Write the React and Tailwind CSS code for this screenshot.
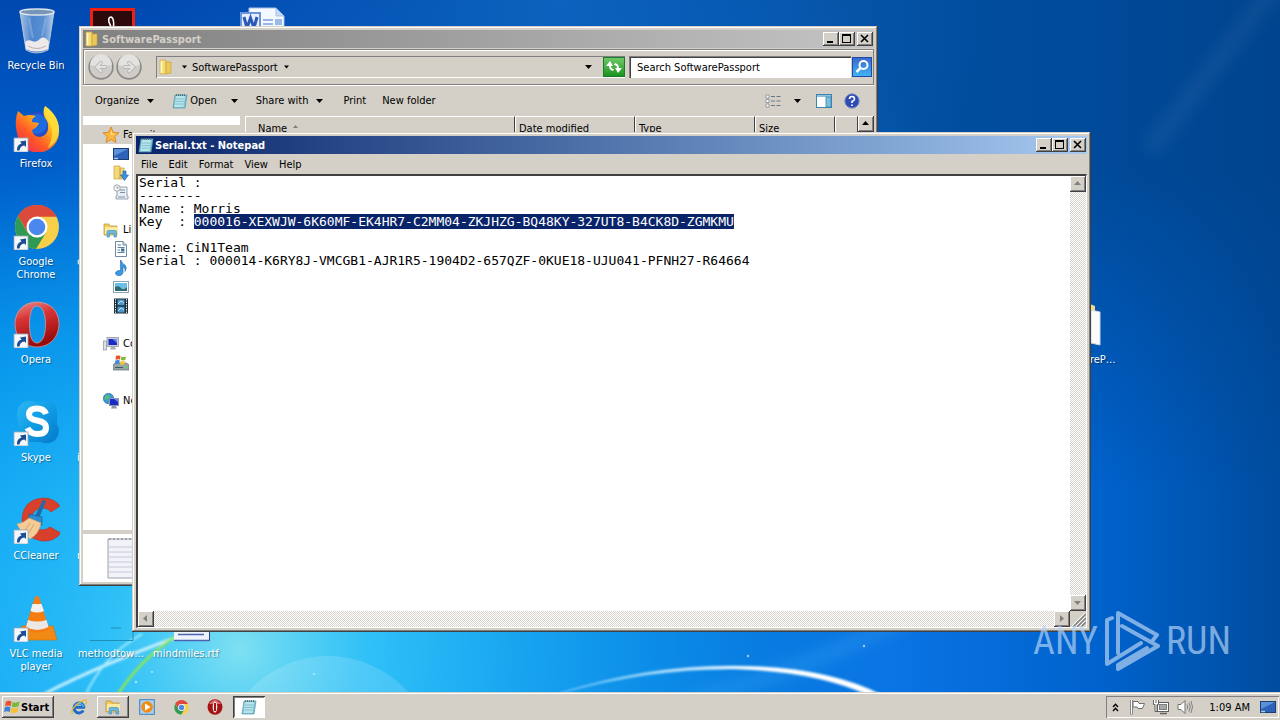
import React, { useEffect, useRef } from 'react'

const raised = 'bg-[#d4d0c8] shadow-[inset_-1px_-1px_#404040,inset_1px_1px_#fff,inset_-2px_-2px_#808080]'
const sunken = 'shadow-[inset_1px_1px_#808080,inset_-1px_-1px_#fff]'
const frame = 'bg-[#d4d0c8] shadow-[inset_-1px_-1px_#404040,inset_1px_1px_#d4d0c8,inset_-2px_-2px_#808080,inset_2px_2px_#fff]'
const track = 'bg-[#ebe8e3] bg-[repeating-conic-gradient(#d8d4cd_0_25%,#fff_0_50%)] bg-[length:2px_2px]'

const NOTE = `Serial :
--------
Name : Morris
Key  : 000016-XEXWJW-6K60MF-EK4HR7-C2MM04-ZKJHZG-BQ48KY-327UT8-B4CK8D-ZGMKMU

Name: CiN1Team
Serial : 000014-K6RY8J-VMCGB1-AJR1R5-1904D2-657QZF-0KUE18-UJU041-PFNH27-R64664`

/* ---------- wallpaper ---------- */

const Wallpaper = () => (
  <svg className="absolute inset-0 h-full w-full" viewBox="0 0 1280 692" preserveAspectRatio="none" aria-hidden="true">
    <defs>
      <linearGradient id="w-left" x1="0" y1="0" x2="0" y2="1">
        <stop offset="0" stopColor="#0048b0" />
        <stop offset=".25" stopColor="#0060cc" />
        <stop offset=".5" stopColor="#008ce6" />
        <stop offset=".75" stopColor="#06a2f2" />
        <stop offset="1" stopColor="#0ca0f2" />
      </linearGradient>
      <linearGradient id="w-right" x1="0" y1="0" x2="1" y2="0">
        <stop offset=".3" stopColor="#0060c4" stopOpacity="0" />
        <stop offset=".7" stopColor="#0a74e4" />
        <stop offset=".86" stopColor="#0062cc" />
        <stop offset="1" stopColor="#004c9e" />
      </linearGradient>
      <linearGradient id="w-top" x1="500" y1="240" x2="860" y2="20" gradientUnits="userSpaceOnUse">
        <stop offset="0" stopColor="#00407c" stopOpacity="0" />
        <stop offset="1" stopColor="#004288" stopOpacity=".75" />
      </linearGradient>
      <linearGradient id="w-fade" x1="0" y1="0" x2="0" y2="1">
        <stop offset="0" stopColor="#fff" />
        <stop offset=".25" stopColor="#fff" />
        <stop offset=".7" stopColor="#000" />
      </linearGradient>
      <mask id="w-mask"><rect width="1280" height="692" fill="url(#w-fade)" /></mask>
      <radialGradient id="w-glow" cx="240" cy="650" r="520" gradientUnits="userSpaceOnUse">
        <stop offset="0" stopColor="#7fe0f2" />
        <stop offset=".25" stopColor="#38c8f8" stopOpacity=".8" />
        <stop offset="1" stopColor="#10a0f8" stopOpacity="0" />
      </radialGradient>
      <radialGradient id="w-sky" cx="560" cy="0" r="420" gradientUnits="userSpaceOnUse">
        <stop offset="0" stopColor="#0c62be" />
        <stop offset="1" stopColor="#0c62be" stopOpacity="0" />
      </radialGradient>
      <linearGradient id="w-arc" x1="560" y1="0" x2="880" y2="0" gradientUnits="userSpaceOnUse">
        <stop offset="0" stopColor="#9fe0ff" stopOpacity=".6" />
        <stop offset=".6" stopColor="#fff" />
        <stop offset="1" stopColor="#fff" />
      </linearGradient>
      <filter id="w-soft" x="-20%" y="-20%" width="140%" height="140%"><feGaussianBlur stdDeviation="1" /></filter>
      <filter id="w-haze" x="-50%" y="-50%" width="200%" height="200%"><feGaussianBlur stdDeviation="8" /></filter>
    </defs>
    <rect width="1280" height="692" fill="url(#w-left)" />
    <rect width="1280" height="692" fill="url(#w-right)" />
    <rect width="1280" height="692" fill="url(#w-top)" mask="url(#w-mask)" />
    <rect width="1280" height="692" fill="url(#w-sky)" />
    <rect width="1280" height="692" fill="url(#w-glow)" />
    <circle cx="328" cy="763" r="107" fill="#fff" opacity=".14" />
    <path d="M1150 150 1280 -20" stroke="#fff" strokeWidth="16" opacity=".06" filter="url(#w-haze)" />
    <path d="M690 700Q810 670 920 610" fill="none" stroke="#5cc4ff" strokeWidth="12" opacity=".25" filter="url(#w-haze)" />
    <g fill="none" filter="url(#w-soft)">
      <path d="M44 694Q100 665 180 636" stroke="#d8f6ff" strokeWidth="3" opacity=".85" />
      <path d="M86 694Q104 655 142 634" stroke="#aeeeff" strokeWidth="2" opacity=".8" />
      <path d="M118 694Q140 660 176 636" stroke="#8fe84a" strokeWidth="2.5" />
      <path d="M560 693Q650 665 734 666Q825 666 882 695L868 695Q815 671 734 669Q650 668 560 693z" fill="url(#w-arc)" stroke="#b8e8ff" strokeOpacity=".4" />
    </g>
    <g fill="#fff" opacity=".6">
      <circle cx="136" cy="682" r="1.2" /><circle cx="152" cy="672" r="1" /><circle cx="314" cy="674" r="1" />
      <circle cx="748" cy="656" r="1.2" /><circle cx="864" cy="646" r="1.2" />
    </g>
  </svg>
)

const Watermark = () => (
  <div className="pointer-events-none absolute right-[49px] bottom-[20px] flex items-center gap-[6px] font-['Liberation_Sans_Narrow','Roboto_Condensed',Roboto,sans-serif] text-[38px] leading-[62px] text-[#b4d2f4]/70">
    <span>ANY</span>
    <svg width="56" height="62" viewBox="0 0 56 62" fill="none" stroke="currentColor" strokeWidth="4" strokeLinejoin="round" strokeLinecap="round">
      <path d="M8 8 3 10V54L37 33M14 43V3L53 25 49 30M18 16 54 36 14 59V55L43 38" />
    </svg>
    <span>RUN</span>
  </div>
)

/* ---------- desktop icons ---------- */

const Shortcut = () => (
  <g transform="translate(2 34)">
    <rect width="14" height="14" fill="#f4f8fc" stroke="#9aa8b8" strokeWidth=".8" />
    <path d="M3 12.500Q2.500 7 7.500 5.500L6 3.500 12 2.500V9L10.300 7.500Q6 8 5.500 12.500z" fill="#1c4c94" />
  </g>
)

const Svg48 = ({ children }) => <svg width="48" height="48" viewBox="0 0 48 48" className="shrink-0" aria-hidden="true">{children}</svg>

const BinIcon = () => (
  <Svg48>
    <defs>
      <linearGradient id="bin" x1="0" x2="1"><stop offset="0" stopColor="#a9c4e4" /><stop offset=".35" stopColor="#4c84cc" /><stop offset=".7" stopColor="#5c90d4" /><stop offset="1" stopColor="#b8cfe8" /></linearGradient>
    </defs>
    <path d="M8 6 14 44Q24 50 36 44L42 6z" fill="url(#bin)" stroke="#b4c4d8" strokeWidth="1" />
    <path d="M13 36Q16 33 20 35T28 33T37 36L36 43Q24 48 14 43z" fill="#eeeaea" />
    <path d="M16 40Q25 45 34 40" fill="none" stroke="#b8b0b0" />
    <path d="M17 12 21 32M34 12 30 30" stroke="#8cb4e4" strokeWidth="2" opacity=".6" />
    <ellipse cx="25" cy="6" rx="17" ry="3" fill="#7894b8" stroke="#dce4ec" strokeWidth="1.500" />
  </Svg48>
)

const FirefoxIcon = () => (
  <Svg48>
    <defs>
      <linearGradient id="fx" x1=".9" y1="0" x2=".1" y2="1"><stop offset="0" stopColor="#fff04a" /><stop offset=".35" stopColor="#ffb41e" /><stop offset=".65" stopColor="#ff5a26" /><stop offset="1" stopColor="#f0225c" /></linearGradient>
    </defs>
    <circle cx="26" cy="25" r="17" fill="#2a4cc0" />
    <circle cx="25" cy="20" r="10" fill="#1c6ce0" />
    <path d="M33 2Q47 12 47 26A21 21 0 0 1 5 29Q2 16 6 7L12 12Q17 10 24 12Q19 15 20 18L27 19Q25 24 20 26Q21 33 28 33Q37 31 36 22Q36 17 33 14Q30 8 33 2z" fill="url(#fx)" />
    <path d="M33 2Q47 12 47 26Q46 38 36 44Q43 30 38 20Q31 11 33 2z" fill="#ffdf3c" opacity=".8" />
    <Shortcut />
  </Svg48>
)

const ChromeMark = () => (
  <>
    <circle cx="25" cy="25" r="22" fill="#f8cf48" />
    <path d="M25 25 6 14A22 22 0 0 1 44.500 14.500H25z" fill="#dc4a3c" />
    <path d="M25 14.500H44.500A22 22 0 0 0 6 14L15.500 30z" fill="#dc4a3c" />
    <path d="M6 14A22 22 0 0 0 24 47L34 30.500 25 35.500 15.500 30.500z" fill="#2e9a56" />
    <circle cx="25" cy="25" r="10.500" fill="#fff" />
    <circle cx="25" cy="25" r="8.300" fill="#4a88ee" />
  </>
)

const ChromeIcon = () => <Svg48><ChromeMark /><Shortcut /></Svg48>

const OperaIcon = () => (
  <Svg48>
    <defs>
      <linearGradient id="op" x1="0" y1="0" x2=".3" y2="1"><stop offset="0" stopColor="#e89090" /><stop offset=".4" stopColor="#d83434" /><stop offset="1" stopColor="#980c0c" /></linearGradient>
    </defs>
    <path fillRule="evenodd" d="M25 2C38 2 47 11 47 24S38 47 25 47 3 37 3 24 12 2 25 2zM25 6C20 6 17.500 13 17.500 24.500S20 43 25 43 33.500 36 33.500 24.500 30 6 25 6z" fill="url(#op)" stroke="#e4a0a0" strokeWidth=".7" />
    <Shortcut />
  </Svg48>
)

const SkypeIcon = () => (
  <Svg48>
    <defs>
      <linearGradient id="sk" x1="0" y1="0" x2="1" y2="1"><stop offset="0" stopColor="#2cb8f4" /><stop offset=".5" stopColor="#109ce4" /><stop offset="1" stopColor="#0478c8" /></linearGradient>
    </defs>
    <path d="M14 3Q20 2 24 4H38Q45 5 45 13V26Q50 36 42 43Q35 47 29 44H14Q6 44 6 36V22Q2 8 14 3z" fill="url(#sk)" />
    <path d="M34 16Q32 10.500 25 10.500Q17 10.500 17 16.500Q17 21 25 22.500Q34 24 34 29.500Q34 36 25.500 36Q18 36 15.500 30" fill="none" stroke="#fff" strokeWidth="6" />
    <Shortcut />
  </Svg48>
)

const CCleanerIcon = () => (
  <Svg48>
    <path d="M48 10Q42 2 31 2Q12 3 10 22Q10 42 30 45Q42 46 49 37L38 31A11 11 0 1 1 39 16z" fill="#d8402c" stroke="#b43020" strokeWidth=".6" />
    <path d="M31 4 34 5 27 22 23 20z" fill="#1c6cac" />
    <path d="M17 18 30 21V29L17 26z" fill="#2c8cd0" stroke="#1a5c98" strokeWidth=".7" />
    <path d="M17 22 29 27Q27 38 18 43Q9 37 5 28Q12 27 17 22z" fill="#f4cc98" stroke="#d8a468" strokeWidth=".7" />
    <path d="M18 27 13 34M22 28 17 37" stroke="#d8a468" />
    <Shortcut />
  </Svg48>
)

const ConeIcon = () => (
  <Svg48>
    <path d="M10 32H41L45 46H6z" fill="#f08a14" stroke="#d87008" strokeWidth=".7" />
    <path d="M23 3Q25 1 27 3L37 35Q25 42 13 35z" fill="#f47c10" />
    <path d="M20.500 10H29.500L32 17Q25 20 18.500 17z" fill="#f4f2f0" />
    <path d="M16 26Q25 29 34.500 26L36.500 33Q25 39 14 33z" fill="#ece8e6" />
    <Shortcut />
  </Svg48>
)

const PdfIcon = () => (
  <Svg48>
    <rect x="4.500" y="3.500" width="42" height="42" fill="#2c0a0c" stroke="#f02010" strokeWidth="3" />
    <path d="M24 11q-3 0-2 5l4 10q2-14-2-15z" fill="none" stroke="#fff" strokeWidth="1.600" />
  </Svg48>
)

const WordIcon = () => (
  <Svg48>
    <g transform="translate(2)">
      <path d="M10 2H37L45 10V46H10z" fill="#f4f8ff" stroke="#a8c0e8" />
      <path d="M37 2V10H45z" fill="#c4dcf4" stroke="#a8c0e8" />
      <path d="M24 14H34M24 18H34" stroke="#7c9ce0" strokeWidth="1.500" />
      <rect x="36" y="13" width="7" height="6" fill="#9cb8e4" />
      <rect x="2" y="7" width="19" height="19" fill="#e8f0fc" stroke="#6c94dc" strokeWidth="2" />
      <path d="M5 11 8 22 11.500 12 15 22 18 11" fill="none" stroke="#2c58b8" strokeWidth="3" />
    </g>
  </Svg48>
)

const PaperIcon = () => (
  <Svg48>
    <rect x="12" y="2" width="36" height="44" fill="#eef2fc" />
    <path d="M12 46.500H48M16 40.500H42" stroke="#4c64b0" strokeWidth="1.500" />
    <path d="M47.500 38V46" stroke="#2c4488" />
  </Svg48>
)

const GhostIcon = () => (
  <Svg48><path d="M3 46.500H46V38M24 34H34" fill="none" stroke="#1c90b8" /></Svg48>
)

const FolderIcon = () => (
  <Svg48>
    <path d="M28 4 33 6V40L28 44z" fill="#f0dc8c" />
    <path d="M29 10 38 12V45L29 43z" fill="#fbfbfb" stroke="#d4d4d4" />
  </Svg48>
)

const NoIcon = () => <Svg48 />

// each cell of the desktop grid is 75 x 98
const shortcuts = [
  { label: 'Recycle Bin', icon: BinIcon, at: 'items-center col-start-1 row-start-1' },
  { label: 'Firefox', icon: FirefoxIcon, at: 'items-center col-start-1 row-start-2' },
  { label: 'Google Chrome', icon: ChromeIcon, at: 'items-center col-start-1 row-start-3' },
  { label: 'Opera', icon: OperaIcon, at: 'items-center col-start-1 row-start-4' },
  { label: 'Skype', icon: SkypeIcon, at: 'items-center col-start-1 row-start-5' },
  { label: 'CCleaner', icon: CCleanerIcon, at: 'items-center col-start-1 row-start-6' },
  { label: 'VLC media player', icon: ConeIcon, at: 'items-center col-start-1 row-start-7' },
  { label: '', icon: PdfIcon, at: 'items-center col-start-2 row-start-1' },
  { label: 'c', icon: NoIcon, at: 'items-start col-start-2 row-start-3' },
  { label: 'i', icon: NoIcon, at: 'items-start col-start-2 row-start-5' },
  { label: 'r', icon: NoIcon, at: 'items-start col-start-2 row-start-6' },
  { label: 'methodtow…', icon: GhostIcon, at: 'items-center col-start-2 row-start-7' },
  { label: 'mindmiles.rtf', icon: PaperIcon, at: 'items-center col-start-3 row-start-7' },
  { label: '', icon: WordIcon, at: 'items-center col-start-4 row-start-1' },
  { label: 'SoftwareP…', icon: FolderIcon, at: 'items-center col-start-15 row-start-4' },
]

const DesktopIcon = ({ label, icon: Icon, at }) => (
  <button className={`flex flex-col pt-[6px] pr-[3px] text-white ${at}`}>
    <Icon />
    <span className="mt-[5px] px-[2px] text-center leading-[13px] [text-shadow:1px_1px_1px_#0006]">{label}</span>
  </button>
)

/* ---------- small icons ---------- */

const Svg16 = ({ children, className = '' }) => (
  <svg width="16" height="16" viewBox="0 0 16 16" className={`shrink-0 ${className}`} aria-hidden="true">{children}</svg>
)

const NotepadIcon = () => (
  <Svg16>
    <path d="M3 2H15L13 15H1z" fill="#7cc4d4" stroke="#5a94a8" strokeWidth=".7" />
    <path d="M4 3H13L11.500 14H2.500z" fill="#b8e4ec" />
    <path d="M4 6H12M4 8.500H12M3.500 11H11.500" stroke="#6cb0c4" strokeWidth=".7" />
    <path d="M4.500 1V3M6.500 1V3M8.500 1V3M10.500 1V3M12.500 1V3" stroke="#486870" strokeWidth=".8" />
  </Svg16>
)

const YellowFolder = () => (
  <Svg16>
    <path d="M2 1H8V15H2z" fill="#f4dc78" stroke="#d0a840" strokeWidth=".7" />
    <path d="M8 3H13V14L8 15z" fill="#ecc858" stroke="#c8a040" strokeWidth=".7" />
    <path d="M3.500 2V14" stroke="#fff8c8" strokeWidth="1.500" />
  </Svg16>
)

const Caret = ({ className = '' }) => (
  <svg width="7" height="4" viewBox="0 0 7 4" className={`shrink-0 ${className}`} aria-hidden="true"><path d="M0 0H7L3.500 4z" fill="currentColor" /></svg>
)

const StarIcon = () => (
  <Svg16><path d="M8 0 10.300 5.300 16 5.800 11.700 9.600 13 15.500 8 12.400 3 15.500 4.300 9.600 0 5.800 5.700 5.300z" fill="#fcb83c" stroke="#d87c1c" strokeWidth=".8" /><path d="M8 3 9.300 6.500 13 7 8 8z" fill="#ffe690" /></Svg16>
)
const ScreenIcon = () => (
  <Svg16><rect x=".5" y="2.500" width="15" height="11" fill="#2c62b8" stroke="#1c3c74" /><path d="M1 3H15L1 10z" fill="#5c90d8" /><path d="M1 12.500H5" stroke="#a8c8ec" strokeWidth="1.500" /></Svg16>
)
const DownloadIcon = () => (
  <Svg16><path d="M1 1H7V14H1zM7 3H11V14H7z" fill="#f4d878" stroke="#c8a040" strokeWidth=".7" /><path d="M10 6H13V10H15.500L11.500 15.500 7.500 10H10z" fill="#3c90e0" stroke="#1c5ca4" strokeWidth=".6" /></Svg16>
)
const RecentIcon = () => (
  <Svg16><path d="M4 3H14V12H15V15H3V12H4z" fill="#e8eef4" stroke="#80909c" strokeWidth=".8" /><path d="M7 6H12M7 8.500H12M5 13H12" stroke="#7890a8" /><circle cx="4" cy="4" r="3.200" fill="#f4f4f4" stroke="#8c98a0" strokeWidth=".8" /><path d="M4 2.500V4H5.500" fill="none" stroke="#667" strokeWidth=".7" /></Svg16>
)
const LibraryIcon = () => (
  <Svg16><path d="M1 2H6L7 4H14V13H1z" fill="#f0cc5c" stroke="#b89030" strokeWidth=".7" /><path d="M2 5H15V12H2z" fill="#fbeaa0" /><path d="M4 15V10Q4 8.500 5.500 8.500H12Q13.500 8.500 13.500 10V15H11V11.500H6.500V15z" fill="#6cb8e4" stroke="#3888bc" strokeWidth=".6" /></Svg16>
)
const DocIcon = () => (
  <Svg16><path d="M2.500 .5H10L13.500 4V15.500H2.500z" fill="#fff" stroke="#7088a0" /><path d="M10 .5V4H13.500" fill="#d0e0f0" stroke="#7088a0" /><path d="M4.500 4H8M4.500 6.500H11.500M4.500 9H7M4.500 11.500H11.500" stroke="#5880a8" /><rect x="8" y="7.500" width="3.500" height="3" fill="#4070a0" /></Svg16>
)
const MusicIcon = () => (
  <Svg16><path d="M8 0Q9 4 12 5Q14.500 8 12 11.500Q13 8 10 7V12.500Q9 16 5.500 15.800Q2 15 2.500 12.500Q4 10 7.500 10.500V0z" fill="#3c98e4" stroke="#1c64ac" strokeWidth=".6" /></Svg16>
)
const PictureIcon = () => (
  <Svg16><rect x=".5" y="2.500" width="15" height="11" fill="#fff" stroke="#8ca4b4" /><rect x="2" y="4" width="12" height="8" fill="#6cc0e8" /><path d="M2 8Q6 6 8 9T14 8V12H2z" fill="#2c6c70" /></Svg16>
)
const VideoIcon = () => (
  <Svg16><rect x="1" y=".5" width="14" height="15" fill="#1c2c34" /><path d="M2.500 1V15M13.500 1V15" stroke="#e0e8ec" strokeDasharray="1.500 1" /><rect x="4.500" y="1.500" width="7" height="5.800" fill="#4c98cc" /><rect x="4.500" y="8.700" width="7" height="5.800" fill="#4c98cc" /><path d="M5 6 8 3 11 5M5 13 8 10 11 12" stroke="#bce0f4" fill="none" /></Svg16>
)
const ComputerIcon = () => (
  <Svg16><rect x="4" y="1.500" width="11.500" height="9" fill="#c8ccd8" stroke="#8890a0" strokeWidth=".7" /><rect x="5.500" y="3" width="8.500" height="6" fill="#1c2cc0" /><path d="M9.500 3H14V7z" fill="#6c88f0" /><path d="M8 11H12L13 13.500H7z" fill="#a8acb4" /><rect x=".5" y="5" width="3" height="9" fill="#dce0e4" stroke="#8890a0" strokeWidth=".7" /></Svg16>
)
const DriveIcon = () => (
  <Svg16><path d="M0 10 2 8H13.500L16 10V15H0z" fill="#98a4a8" stroke="#607078" strokeWidth=".7" /><path d="M2 12.500H10" stroke="#405860" /><rect x="11.500" y="11.500" width="2.500" height="1.500" fill="#50d850" /><path d="M3 .8Q5 0 7.500 .8L7 4.500Q4.500 4 2.500 4.800z" fill="#e8542c" /><path d="M8.300 1.500Q10 2.500 13 1.500L12.300 5Q9.500 5.800 7.800 4.900z" fill="#80bc3c" /><path d="M2.300 5.500Q4.500 4.800 6.700 5.300L6.200 9Q4 8 1.800 9z" fill="#3c88dc" /><path d="M7.600 5.800Q9.500 6.800 12 6L11.500 9.300Q9 10 7 9.200z" fill="#f8c42c" /></Svg16>
)
const NetworkIcon = () => (
  <Svg16><circle cx="5.500" cy="5.500" r="5.200" fill="#3c98d8" stroke="#1c68a0" strokeWidth=".6" /><path d="M2 3Q5 1 7 3L5 6 2 7zM5 8 8 7V10z" fill="#58c068" /><rect x="6.500" y="5.500" width="9" height="7" fill="#1c2cc0" stroke="#9098b0" /><path d="M11 6H15V9z" fill="#6c88f0" /><path d="M9 13H13L14 15.500H8z" fill="#8c94a8" /></Svg16>
)

const WinFlag = () => (
  <Svg16>
    <path d="M2 2.500Q5 .8 7.500 2.500L6.700 7.300Q4 5.800 1 7.300z" fill="#e8542c" />
    <path d="M8.500 3Q11 4.500 15.500 2.500L14.500 7.300Q11 9 7.700 7.700z" fill="#7cb83c" />
    <path d="M.900 8.300Q3.500 6.800 6.500 8.400L5.700 13Q3 11.500 0 13z" fill="#3c80d8" />
    <path d="M7.500 8.800Q10.500 10.300 14.300 8.500L13.300 13Q10 15 6.700 13.400z" fill="#f8c02c" />
  </Svg16>
)
const IeIcon = () => (
  <Svg16>
    <path d="M13 8.500A5 5 0 1 0 12.300 11.500M4 8.300H14" fill="none" stroke="#1c6cc8" strokeWidth="3" />
    <path d="M12.500 8A4.600 4.600 0 0 0 4 6.500" fill="none" stroke="#48b0f0" strokeWidth="1.500" />
    <path d="M1.500 15Q-1 11 6 5.500T15 1Q16.500 2.500 14.500 5.500" fill="none" stroke="#e8b828" strokeWidth="1.200" />
  </Svg16>
)
const PlayerIcon = () => (
  <Svg16><rect x=".7" y=".7" width="14.600" height="14.600" fill="#a8d0f0" stroke="#3c80c0" /><circle cx="8" cy="8" r="5.800" fill="#f48c14" /><path d="M6 4.500 11.500 8 6 11.500z" fill="#fff" /></Svg16>
)
const ChromeSmall = () => <svg width="15" height="15" viewBox="2 2 46 46" aria-hidden="true"><ChromeMark /></svg>
const OperaSmall = () => (
  <Svg16><ellipse cx="8" cy="8" rx="7.500" ry="7.800" fill="#a81414" /><path d="M2 5Q8-3 14 5" fill="#d86c6c" /><ellipse cx="8" cy="8" rx="2.300" ry="5.500" fill="#f4ecec" /><path d="M8 4V12" stroke="#a81414" strokeWidth="2" /></Svg16>
)

/* ---------- window chrome ---------- */

const CaptionButtons = () => (
  <div className="ml-auto flex items-center pr-px text-black">
    <button aria-label="Minimize" className={`h-[14px] w-4 ${raised}`}>
      <svg width="16" height="14" aria-hidden="true"><path d="M4 9H10V11H4z" /></svg>
    </button>
    <button aria-label="Maximize" className={`h-[14px] w-4 ${raised}`}>
      <svg width="16" height="14" aria-hidden="true"><path fillRule="evenodd" d="M3 2H12V11H3zM4 4V10H11V4z" /></svg>
    </button>
    <button aria-label="Close" className={`ml-[2px] h-[14px] w-4 ${raised}`}>
      <svg width="16" height="14" aria-hidden="true"><path d="M4 3 11 10M11 3 4 10" stroke="#000" strokeWidth="1.600" /></svg>
    </button>
  </div>
)

const arrows = { up: 'M4 9H11L7.500 5z', down: 'M4 6H11L7.500 10z', left: 'M9 4V11L5 7.500z', right: 'M6 4V11L10 7.500z' }
const ScrollButton = ({ dir, className = 'text-[#808080]' }) => (
  <button aria-label={`Scroll ${dir}`} className={`h-4 w-4 shrink-0 ${raised} ${className}`}>
    <svg width="16" height="16" aria-hidden="true"><path d={arrows[dir]} fill="currentColor" /></svg>
  </button>
)

/* ---------- explorer ---------- */

const tree = [
  { label: 'Favorites', icon: StarIcon, active: true, items: [['Desktop', ScreenIcon], ['Downloads', DownloadIcon], ['Recent Places', RecentIcon]] },
  { label: 'Libraries', icon: LibraryIcon, items: [['Documents', DocIcon], ['Music', MusicIcon], ['Pictures', PictureIcon], ['Videos', VideoIcon]] },
  { label: 'Computer', icon: ComputerIcon, items: [['Local Disk (C:)', DriveIcon]] },
  { label: 'Network', icon: NetworkIcon, items: [] },
]

const columns = [
  ['Name', 'w-[270px] pl-[13px]'],
  ['Date modified', 'w-[120px] pl-1'],
  ['Type', 'w-[120px] pl-1'],
  ['Size', 'w-20 pl-1'],
  ['', ''],
]

const Explorer = () => (
  <section aria-label="SoftwarePassport" className={`absolute top-[26px] right-[402px] bottom-[106px] left-[79px] flex flex-col p-1 ${frame}`}>
    <header className="flex h-[18px] shrink-0 items-center gap-[2px] bg-linear-to-r from-[#808080] to-[#c4c4c4] pl-px font-bold text-[#d4d0c8]">
      <YellowFolder />
      <h1>SoftwarePassport</h1>
      <CaptionButtons />
    </header>

    <div className="mt-px flex h-9 shrink-0 items-center border border-[#808080] px-1 shadow-[inset_1px_1px_#fff,0_1px_#fff]">
      {['M16 12H8M12 8 8 12 12 16', 'M8 12H16M12 8 16 12 12 16'].map((d, i) => (
        <button key={d} aria-label={i ? 'Forward' : 'Back'} className="mr-[2px]">
          <svg width="26" height="26" viewBox="0 0 24 24" fill="none" strokeLinecap="round" aria-hidden="true">
            <circle cx="12" cy="12" r="11" fill="#cfccc9" stroke="#8c8a88" strokeWidth="1.500" />
            <path d="M2 10A10 10 0 0 1 22 10Q12 14 2 10z" fill="#e4e2e0" />
            <path d={d} stroke="#b8b5b2" strokeWidth="3.500" />
            <path d={d} stroke="#e4e2e0" strokeWidth="2" />
          </svg>
        </button>
      ))}
      <div className={`ml-3 flex h-[22px] flex-1 items-center pl-[2px] ${sunken}`}>
        <YellowFolder />
        <Caret className="ml-2 w-[5px]" />
        <button className="ml-[5px]">SoftwarePassport</button>
        <Caret className="ml-[6px] w-[5px]" />
        <Caret className="mr-[11px] ml-auto" />
        <button aria-label="Refresh" className="flex h-5 w-[22px] items-center justify-center border border-[#1c7c2c] bg-linear-to-b from-[#6cc868] to-[#12941c]">
          <svg width="18" height="16" viewBox="0 0 18 16" fill="#fff" aria-hidden="true"><path d="M1 7 5 2 8 7H6Q6 10 9 10L8 12Q4 11 4 7zM17 9 13 14 10 9H12Q12 6 9 6L10 4Q14 5 14 9z" /></svg>
        </button>
      </div>
      <input aria-label="Search" defaultValue="Search SoftwarePassport" className="ml-1 h-[22px] w-[222px] bg-white pl-2 shadow-[inset_1px_1px_#808080,inset_2px_2px_#404040] outline-none" />
      <button aria-label="Go" className="-mr-[3px] ml-px flex h-5 w-5 items-center justify-center border border-[#1c4ca8] bg-linear-to-b from-[#3c68d0] to-[#40b4f0]">
        <svg width="16" height="16" viewBox="0 0 16 16" fill="none" stroke="#fff" aria-hidden="true"><circle cx="9.500" cy="6" r="4" strokeWidth="2" /><path d="M6.500 9 2.500 13" strokeWidth="2.500" /></svg>
      </button>
    </div>

    <nav className="flex h-[31px] shrink-0 items-center pl-3">
      <button className="flex items-center gap-2">Organize <Caret /></button>
      <button className="ml-[18px] flex items-center gap-[2px]"><NotepadIcon />Open <Caret className="ml-3" /></button>
      <button className="ml-[18px] flex items-center gap-2">Share with <Caret /></button>
      <button className="ml-5">Print</button>
      <button className="ml-4">New folder</button>
      <button aria-label="View" className="ml-auto flex items-center gap-[13px]">
        <Svg16>
          <path d="M1 2H4V5H1zM1 6.500H4V9.500H1zM1 11H4V14H1z" fill="#fff" stroke="#808890" strokeWidth=".8" />
          <path d="M6 3.500H10M11.500 3.500H15.500M6 8H10M11.500 8H15.500M6 12.500H10M11.500 12.500H15.500" stroke="#687888" />
        </Svg16>
        <Caret />
      </button>
      <button aria-label="Preview pane" className="ml-[15px]">
        <Svg16><rect x=".5" y="1.500" width="15" height="13" fill="#fff" stroke="#3c84ac" /><path d="M1 3H15" stroke="#8cc0dc" strokeWidth="2" /><rect x="10" y="4" width="5" height="10" fill="#7cc0dc" stroke="#3c84ac" strokeWidth=".8" /></Svg16>
      </button>
      <button aria-label="Help" className="mr-[14px] ml-3">
        <svg width="16" height="16" viewBox="0 0 16 16" aria-hidden="true">
          <circle cx="8" cy="8" r="7.200" fill="#2c4cb4" stroke="#7c90c8" />
          <path d="M5.500 6Q5.500 3.500 8 3.500T10.500 6Q10.500 7.500 8 8.500V10M8 11.500V13" fill="none" stroke="#fff" strokeWidth="1.700" />
        </svg>
      </button>
    </nav>

    <div className="flex min-h-0 flex-1">
      <ul className="w-[157px] shrink-0 overflow-hidden bg-white pt-[9px]">
        {tree.map(({ label, icon: Icon, active, items }) => (
          <li key={label} className="mb-[19px]">
            <a href="#" className={`flex h-[19px] items-center gap-1 pl-5 ${active ? 'bg-[#d4d0c8]' : ''}`}><Icon />{label}</a>
            <ul>
              {items.map(([name, ItemIcon]) => (
                <li key={name}><a href="#" aria-label={name} className="flex h-[19px] items-center pl-[30px]"><ItemIcon /></a></li>
              ))}
            </ul>
          </li>
        ))}
      </ul>
      <div className="ml-[5px] flex min-w-0 flex-1 bg-white">
        <table className="h-6 w-full table-fixed border-separate border-spacing-0 self-start bg-[#d4d0c8]">
          <thead>
            <tr>
              {columns.map(([name, cls]) => (
                <th key={name} className={`h-6 border-t border-r border-b border-t-white border-r-[#404040] border-b-[#808080] text-left font-normal shadow-[inset_1px_0_#fff] ${cls}`}>
                  {name}{name === 'Name' && <svg width="5" height="3" className="mb-[5px] ml-[6px] inline" aria-hidden="true"><path d="M0 3H5L2.500 0z" fill="#808080" /></svg>}
                </th>
              ))}
            </tr>
          </thead>
        </table>
        <div className={`w-4 ${track}`}><ScrollButton dir="up" className="text-black" /></div>
      </div>
    </div>

    <footer className="mt-1 h-12 shrink-0 bg-white pt-[3px] pl-6">
      <svg width="36" height="42" viewBox="0 0 36 42" aria-hidden="true">
        <path d="M1 2H31V41H1z" fill="#f2f3f8" stroke="#9ca0ac" />
        <path d="M2 10H30M2 15H30M2 20H30M2 25H30M2 30H30M2 35H30" stroke="#c4cadc" />
        <path d="M2 2H31" stroke="#a0a4ac" strokeWidth="2" strokeDasharray="2 2" />
      </svg>
    </footer>
  </section>
)

/* ---------- notepad ---------- */

const Notepad = () => {
  const ref = useRef(null)

  useEffect(() => {
    const start = NOTE.indexOf('000016')
    ref.current.focus()
    ref.current.setSelectionRange(start, NOTE.indexOf('\n', start))
  }, [])

  return (
    <section aria-label="Serial.txt - Notepad" className={`absolute top-[132px] right-[189px] bottom-[60px] left-[132px] flex flex-col p-1 ${frame}`}>
      <header className="flex h-[18px] shrink-0 items-center gap-px bg-linear-to-r from-[#0a246a] to-[#a6caf0] pl-[2px] font-bold text-white">
        <NotepadIcon />
        <h2>Serial.txt - Notepad</h2>
        <CaptionButtons />
      </header>
      <nav className="flex h-5 shrink-0 items-center gap-[11px] pl-[5px]">
        {['File', 'Edit', 'Format', 'View', 'Help'].map(m => <button key={m}>{m}</button>)}
      </nav>
      <div className="grid min-h-0 flex-1 grid-cols-[1fr_16px] grid-rows-[1fr_16px] border-t-2 border-r border-b border-l-2 border-t-[#404040] border-r-white border-b-white border-l-[#404040] bg-white">
        <textarea
          ref={ref}
          aria-label="Document text"
          spellCheck={false}
          wrap="off"
          defaultValue={NOTE}
          className="resize-none overflow-hidden pl-px font-['DejaVu_Sans_Mono',monospace] text-[13px] leading-[13px] text-black caret-transparent outline-none selection:bg-[#0a246a] selection:text-white"
        />
        <div className={`flex flex-col justify-between ${track}`}><ScrollButton dir="up" /><ScrollButton dir="down" /></div>
        <div className={`flex justify-between ${track}`}><ScrollButton dir="left" /><ScrollButton dir="right" /></div>
        <svg width="16" height="16" className="bg-[#d4d0c8]" aria-hidden="true">
          <path d="M3 16 16 3M7 16 16 7M11 16 16 11" stroke="#808080" strokeWidth="1.500" />
          <path d="M2 15 15 2M6 15 15 6M10 15 15 10" stroke="#fff" />
        </svg>
      </div>
    </section>
  )
}

/* ---------- taskbar ---------- */

const tasks = [
  ['Internet Explorer', IeIcon, ''],
  ['Explorer', LibraryIcon, raised],
  ['Media Player', PlayerIcon, ''],
  ['Chrome', ChromeSmall, ''],
  ['Opera', OperaSmall, ''],
  ['Notepad', NotepadIcon, 'bg-white shadow-[inset_1px_1px_#404040,inset_-1px_-1px_#fff,inset_2px_2px_#808080]'],
]

const Taskbar = () => (
  <footer className="flex h-7 shrink-0 items-center border-t border-[#d4d0c8] bg-[#d4d0c8] pt-px pl-[2px] shadow-[inset_0_1px_#fff]">
    <button className={`flex h-[22px] w-[52px] items-center gap-px pl-[2px] font-bold ${raised}`}><WinFlag />Start</button>
    <div className="ml-[9px] flex gap-[2px]">
      {tasks.map(([name, Icon, look]) => (
        <button key={name} aria-label={name} className={`flex h-[22px] w-8 items-center justify-center ${look}`}><Icon /></button>
      ))}
    </div>
    <div className={`mr-px ml-auto flex h-[22px] items-center pr-[3px] pl-[6px] ${sunken}`}>
      <button aria-label="Show hidden icons">
        <svg width="7" height="9" viewBox="0 0 7 9" fill="none" stroke="#000" strokeWidth="1.400" aria-hidden="true"><path d="M1 4 3.500 1.200 6 4M1 8 3.500 5.200 6 8" /></svg>
      </button>
      <Svg16 className="ml-[10px]"><path d="M2.500 1V15.500" stroke="#707070" strokeWidth="2.500" /><path d="M2.500 1V15" stroke="#fff" /><path d="M4 2.500H9L10 4.500H15.500L13.500 9.500H9L8 8H4z" fill="#fff" stroke="#707070" /></Svg16>
      <Svg16 className="ml-2">
        <rect x="4.500" y="3.500" width="11" height="9" fill="#fff" stroke="#606060" />
        <rect x="6.500" y="5.500" width="7" height="5" fill="#a8a8a8" stroke="#808080" />
        <path d="M7 14.500H14" stroke="#606060" strokeWidth="1.500" />
        <path d="M.500 1V5.500H2V12.500H4V5.500H5.500V1" fill="#fff" stroke="#606060" />
        <path d="M3 1V4" stroke="#606060" />
      </Svg16>
      <Svg16 className="ml-2"><path d="M1 5.500H4L8 1.500V14.500L4 10.500H1z" fill="#fff" stroke="#707070" /><path d="M10 5.500Q11.500 8 10 10.500M12 3.500Q14.500 8 12 12.500M14 2Q17 8 14 14" fill="none" stroke="#808080" /></Svg16>
      <time className="ml-4">1:09 AM</time>
      <button aria-label="Show desktop" className="ml-[10px]"><ScreenIcon /></button>
    </div>
  </footer>
)

export default function App() {
  return (
    <div className="flex h-screen flex-col overflow-hidden font-['DejaVu_Sans_Condensed','DejaVu_Sans',sans-serif] text-[11px] leading-[13px] text-black">
      <main className="relative min-h-0 flex-1 overflow-hidden">
        <Wallpaper />
        <div className="relative grid w-max auto-rows-[98px] grid-cols-[repeat(15,75px)]">
          {shortcuts.map(s => <DesktopIcon key={s.at} {...s} />)}
        </div>
        <Explorer />
        <Notepad />
        <Watermark />
      </main>
      <Taskbar />
    </div>
  )
}
